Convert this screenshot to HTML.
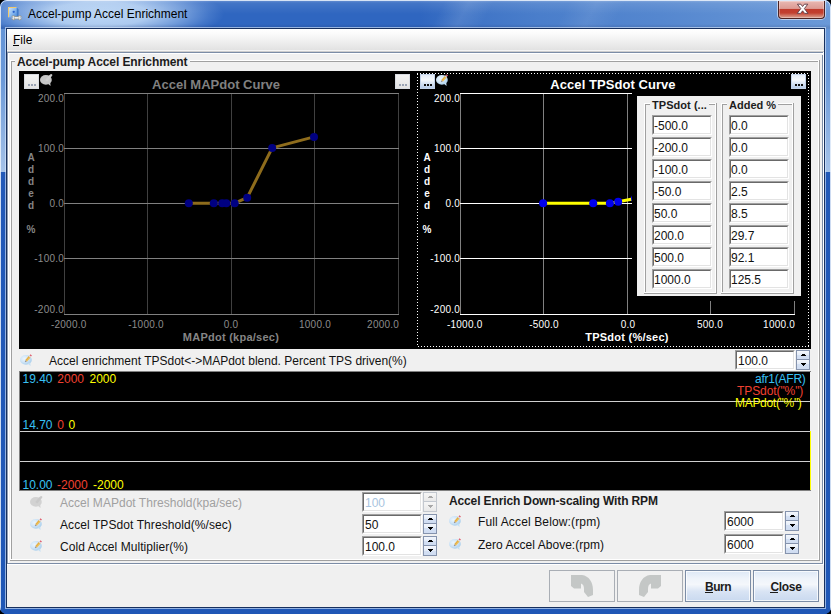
<!DOCTYPE html>
<html><head><meta charset="utf-8"><title>Accel-pump Accel Enrichment</title>
<style>
html,body{margin:0;padding:0;}
body{width:831px;height:614px;background:#000;overflow:hidden;position:relative;font-family:"Liberation Sans",sans-serif;}
.t{position:absolute;white-space:pre;font-family:"Liberation Sans",sans-serif;}
.t.s10{letter-spacing:0.22px;}
.abs{position:absolute;}
.fld{position:absolute;background:#fff;box-sizing:border-box;border-top:1px solid #a0a0a0;border-left:1px solid #a0a0a0;border-right:1px solid #fff;border-bottom:1px solid #fff;}
.fld i{position:absolute;left:0;top:0;right:0;bottom:0;border-top:1px solid #696969;border-left:1px solid #696969;border-right:1px solid #e3e3e3;border-bottom:1px solid #e3e3e3;}
.grp{position:absolute;box-sizing:border-box;border:1px solid #fff;}
.grp:before{content:"";position:absolute;left:-2px;top:-2px;right:0;bottom:0;border:1px solid #a0a0a0;}
.sb{position:absolute;width:15px;height:15px;box-sizing:border-box;border:1px solid #d9dce2;background:linear-gradient(#f3f3f3,#ebebeb 55%,#e2e2e2);}
.sb.hot{border-color:#c3d3ea;background:linear-gradient(#e4ecf8 0%,#f6f9fd 38%,#dbe6f5 62%,#b6cbe9 100%);}
.sb.hot b{background:#111;}
.sb b{position:absolute;top:9px;width:2px;height:2px;background:#9aa3b4;}
.btn{position:absolute;box-sizing:border-box;height:32px;width:66px;border:1px solid #707070;border-radius:0px;}
.btn.en{background:linear-gradient(#dde8f6 0%,#eef3fa 25%,#f4f7fb 45%,#d9e4f4 68%,#c9d9ef 100%);border-color:#7c8da6;box-shadow:inset 0 0 0 1px rgba(255,255,255,.75);}
.btn.dis{background:#f1f1f1;border-color:#a9aeb5;}
.spin{position:absolute;width:14px;height:10px;box-sizing:border-box;border:1px solid #8593ad;background:linear-gradient(#f4f7fc,#e4ecf8 50%,#d4e0f3 50%,#cfdcf1);}
.spin.d{border-color:#c3c8cf;background:linear-gradient(#f6f6f6,#e9e9e9);}
</style></head><body>

<div class="abs" style="left:0;top:0;width:831px;height:614px;border-radius:7px 7px 7px 7px;overflow:hidden;background:#2259b8;">
<div class="abs" style="left:0;top:0;width:831px;height:29px;background:linear-gradient(90deg,#2f66c0 0px,#2f66c0 420px,#3f74c6 470px,#4a7ecb 540px,#5587cf 660px,#6a99d8 831px);"></div>
<div class="abs" style="left:400px;top:0;width:431px;height:29px;background:linear-gradient(118deg,rgba(255,255,255,0) 40px,rgba(255,255,255,.10) 62px,rgba(255,255,255,0) 84px,rgba(255,255,255,0) 150px,rgba(255,255,255,.08) 175px,rgba(255,255,255,0) 200px);"></div>
<div class="abs" style="left:-26px;top:-16px;width:250px;height:60px;background:radial-gradient(ellipse closest-side at center,rgba(196,221,248,.95) 0%,rgba(190,216,246,.88) 40%,rgba(168,200,240,.55) 68%,rgba(150,186,236,.2) 88%,rgba(150,186,236,0) 100%);"></div>
<div class="abs" style="left:0;top:0;width:831px;height:29px;background:linear-gradient(180deg,rgba(255,255,255,.30) 0px,rgba(255,255,255,.10) 3px,rgba(255,255,255,0) 14px,rgba(0,0,40,0) 24px,rgba(0,0,40,.10) 27px);"></div>
<div class="abs" style="left:0;top:29px;width:7px;height:585px;background:linear-gradient(180deg,#6494d6 0px,#6b99d8 50px,#a5c2e8 143px,#2259b8 143px,#1f57b6 585px);"></div>
<div class="abs" style="left:824px;top:29px;width:7px;height:585px;background:linear-gradient(180deg,#6494d6 0px,#6b99d8 50px,#a5c2e8 143px,#2259b8 143px,#1f57b6 585px);"></div>
<div class="abs" style="left:0;top:607px;width:831px;height:7px;background:#1f57b6;"></div>
<div class="abs" style="left:0;top:0;width:829px;height:620px;border:1px solid rgba(235,242,252,.85);border-radius:7px 7px 0 0;"></div>
<div class="abs" style="left:5px;top:27px;width:819px;height:580px;border:1px solid rgba(225,238,255,.6);"></div>
<div class="abs" style="left:6px;top:28px;width:817px;height:578px;border:1px solid #17305e;"></div>
</div>
<svg class="abs" style="left:7px;top:6px" width="18" height="18" viewBox="0 0 18 18">
<defs><linearGradient id="docg" x1="0" y1="0" x2="1" y2="1"><stop offset="0" stop-color="#d6e8fb"/><stop offset=".5" stop-color="#8fbdf0"/><stop offset="1" stop-color="#4a8cdc"/></linearGradient></defs>
<path d="M9.5 1.6 L11.6 3.2 L11.6 11.6 L9.5 11.2Z" fill="#3f7bcc"/>
<rect x="1.2" y="1.2" width="8.4" height="10.2" fill="url(#docg)"/>
<path d="M1.5 11.2 L1.5 1.5 L9.4 1.5" fill="none" stroke="#f2c96a" stroke-width="1"/>
<circle cx="6.7" cy="5.8" r="1.15" fill="#2a62cc"/>
<g stroke="#8e8e82" stroke-width=".7" fill="#e6e6e2"><circle cx="6.6" cy="11.8" r="2.1"/><circle cx="12.6" cy="11.8" r="2.1"/><rect x="7.6" y="10.8" width="4" height="2"/></g>
<rect x="7.4" y="11.15" width="4.4" height="1.3" fill="#f4f4f2"/>
<rect x="4.2" y="11.2" width="1.8" height="1.2" fill="#7fa9e2"/><rect x="13.2" y="11.2" width="1.8" height="1.2" fill="#8fb2e4"/>
</svg>
<div class="t" style="left:28px;top:8px;font-size:12px;line-height:12px;font-weight:normal;color:#000;">Accel-pump Accel Enrichment</div>
<div class="abs" style="left:777px;top:0px;width:49px;height:20px;box-sizing:border-box;border:1px solid rgba(255,255,255,.55);border-top:none;border-radius:0 0 5px 5px;"></div>
<div class="abs" style="left:778px;top:1px;width:47px;height:18px;box-sizing:border-box;border:1px solid #4d2323;border-top:none;border-radius:0 0 4px 4px;background:linear-gradient(#e9b8b2 0%,#dc9b94 44%,#c03a2c 47%,#c23f2f 70%,#cf7766 86%,#dba090 100%);box-shadow:inset 0 0 0 1px rgba(255,255,255,.30);"></div>
<svg class="abs" style="left:795px;top:3px" width="16" height="12" viewBox="0 0 16 12"><path d="M2.4 1.2 L5.8 1.2 L7.6 3.5 L9.4 1.2 L12.8 1.2 L9.4 5.6 L13 10.4 L9.6 10.4 L7.6 7.8 L5.6 10.4 L2.2 10.4 L5.8 5.6 Z" fill="#fff" stroke="#5b3a44" stroke-width=".9" stroke-linejoin="round"/></svg>
<div style="position:absolute;left:7px;top:29px;width:817px;height:578px;background:#f0f0f0;"></div>
<div style="position:absolute;left:7px;top:29px;width:817px;height:22px;background:linear-gradient(#ffffff 0%,#fbfbfb 20%,#f3f3f3 45%,#e9e9e9 75%,#e2e2e2 95%,#f4f4f4 96%,#f4f4f4 100%);"></div>
<div style="position:absolute;left:7px;top:51px;width:817px;height:1px;background:#cdcdcd;"></div>
<div style="position:absolute;left:7px;top:52px;width:816px;height:1px;background:#7b8ca6;"></div>
<div style="position:absolute;left:8px;top:53px;width:815px;height:1px;background:#fff;"></div>
<div style="position:absolute;left:7px;top:52px;width:1px;height:512px;background:#8e9bb0;"></div>
<div style="position:absolute;left:8px;top:53px;width:1px;height:510px;background:#fff;"></div>
<div style="position:absolute;left:822px;top:55px;width:1px;height:509px;background:#7b8ca6;"></div>
<div style="position:absolute;left:823px;top:52px;width:1px;height:513px;background:#fff;"></div>
<div style="position:absolute;left:7px;top:563px;width:816px;height:1px;background:#7b8ca6;"></div>
<div style="position:absolute;left:7px;top:564px;width:817px;height:1px;background:#fff;"></div>
<div class="t" style="left:13px;top:34px;font-size:12px;line-height:12px;font-weight:normal;color:#000;">File</div>
<div style="position:absolute;left:13px;top:45px;width:6px;height:1px;background:#000;"></div>
<div class="abs" style="left:10px;top:60px;width:809px;height:500px;box-sizing:border-box;border:1px solid #ffffff;"></div>
<div style="position:absolute;left:11px;top:61px;width:1px;height:498px;background:#a0a0a0;"></div>
<div style="position:absolute;left:11px;top:61px;width:807px;height:1px;background:#a0a0a0;"></div>
<div style="position:absolute;left:10px;top:560px;width:810px;height:1px;background:#a0a0a0;"></div>
<div style="position:absolute;left:819px;top:60px;width:1px;height:501px;background:#a0a0a0;"></div>
<div style="position:absolute;left:15px;top:56px;width:175px;height:12px;background:#f0f0f0;"></div>
<div class="t" style="left:17px;top:56px;font-size:12px;line-height:12px;font-weight:bold;color:#1c1c1c;letter-spacing:-0.09px;">Accel-pump Accel Enrichment</div>
<div style="position:absolute;left:19px;top:71px;width:792px;height:278px;background:#000;"></div>
<svg class="abs" style="left:0;top:0" width="831" height="614" viewBox="0 0 831 614" shape-rendering="crispEdges"><rect x="64" y="93" width="1" height="222" fill="#404040"/><rect x="147" y="93" width="1" height="222" fill="#404040"/><rect x="231" y="93" width="1" height="222" fill="#404040"/><rect x="314" y="93" width="1" height="222" fill="#404040"/><rect x="398" y="93" width="1" height="222" fill="#404040"/><rect x="64" y="93" width="335" height="1" fill="#808080"/><rect x="64" y="148" width="335" height="1" fill="#808080"/><rect x="64" y="203" width="335" height="1" fill="#808080"/><rect x="64" y="258" width="335" height="1" fill="#808080"/><rect x="64" y="314" width="335" height="1" fill="#808080"/><rect x="460" y="93" width="1" height="222" fill="#808080"/><rect x="543" y="93" width="1" height="222" fill="#808080"/><rect x="627" y="93" width="1" height="222" fill="#808080"/><rect x="710" y="93" width="1" height="222" fill="#808080"/><rect x="794" y="93" width="1" height="222" fill="#808080"/><rect x="460" y="93" width="335" height="1" fill="#ffffff"/><rect x="460" y="148" width="335" height="1" fill="#ffffff"/><rect x="460" y="203" width="335" height="1" fill="#ffffff"/><rect x="460" y="258" width="335" height="1" fill="#ffffff"/><rect x="460" y="314" width="335" height="1" fill="#ffffff"/></svg>
<svg class="abs" style="left:0;top:0" width="831" height="614" viewBox="0 0 831 614"><polyline fill="none" stroke="#8e6c1c" stroke-width="3" stroke-linejoin="round" points="188.8,203.2 213.8,203.2 222.2,203.2 226.3,203.2 234.7,203.2 247.2,197.7 272.2,147.9 314.0,136.9"/><circle cx="188.8" cy="203.2" r="4" fill="#000082"/><circle cx="213.8" cy="203.2" r="4" fill="#000082"/><circle cx="222.2" cy="203.2" r="4" fill="#000082"/><circle cx="226.3" cy="203.2" r="4" fill="#000082"/><circle cx="234.7" cy="203.2" r="4" fill="#000082"/><circle cx="247.2" cy="197.7" r="4" fill="#000082"/><circle cx="272.2" cy="147.9" r="4" fill="#000082"/><circle cx="314.0" cy="136.9" r="4" fill="#000082"/><polyline fill="none" stroke="#ffff00" stroke-width="3" stroke-linejoin="round" points="543.1,203.2 593.2,203.2 609.9,203.2 618.2,201.8 635.0,198.5 660.0,186.8 710.1,152.3 793.6,133.9"/><circle cx="543.1" cy="203.2" r="4" fill="#0000ee"/><circle cx="593.2" cy="203.2" r="4" fill="#0000ee"/><circle cx="609.9" cy="203.2" r="4" fill="#0000ee"/><circle cx="618.2" cy="201.8" r="4" fill="#0000ee"/><circle cx="635.0" cy="198.5" r="4" fill="#0000ee"/><circle cx="660.0" cy="186.8" r="4" fill="#0000ee"/><circle cx="710.1" cy="152.3" r="4" fill="#0000ee"/><circle cx="793.6" cy="133.9" r="4" fill="#0000ee"/></svg>
<div class="t" style="left:66px;width:300px;text-align:center;top:78px;font-size:13px;line-height:13px;font-weight:bold;color:#808080;">Accel MAPdot Curve</div>
<div class="t" style="left:463px;width:300px;text-align:center;top:78px;font-size:13px;line-height:13px;font-weight:bold;color:#ffffff;letter-spacing:0.06px;">Accel TPSdot Curve</div>
<div class="t s10" style="right:767px;top:94px;font-size:10px;line-height:10px;font-weight:normal;color:#8c8c8c;">200.0</div>
<div class="t s10" style="right:767px;top:144px;font-size:10px;line-height:10px;font-weight:normal;color:#8c8c8c;">100.0</div>
<div class="t s10" style="right:767px;top:199px;font-size:10px;line-height:10px;font-weight:normal;color:#8c8c8c;">0.0</div>
<div class="t s10" style="right:767px;top:254px;font-size:10px;line-height:10px;font-weight:normal;color:#8c8c8c;">-100.0</div>
<div class="t s10" style="right:767px;top:305px;font-size:10px;line-height:10px;font-weight:normal;color:#8c8c8c;">-200.0</div>
<div class="t s10" style="right:371px;top:94px;font-size:10px;line-height:10px;font-weight:normal;color:#ffffff;">200.0</div>
<div class="t s10" style="right:371px;top:144px;font-size:10px;line-height:10px;font-weight:normal;color:#ffffff;">100.0</div>
<div class="t s10" style="right:371px;top:199px;font-size:10px;line-height:10px;font-weight:normal;color:#ffffff;">0.0</div>
<div class="t s10" style="right:371px;top:254px;font-size:10px;line-height:10px;font-weight:normal;color:#ffffff;">-100.0</div>
<div class="t s10" style="right:371px;top:305px;font-size:10px;line-height:10px;font-weight:normal;color:#ffffff;">-200.0</div>
<div class="t s10" style="left:51px;top:320px;font-size:10px;line-height:10px;font-weight:normal;color:#8c8c8c;">-2000.0</div>
<div class="t s10" style="left:-4px;width:300px;text-align:center;top:320px;font-size:10px;line-height:10px;font-weight:normal;color:#8c8c8c;">-1000.0</div>
<div class="t s10" style="left:81px;width:300px;text-align:center;top:320px;font-size:10px;line-height:10px;font-weight:normal;color:#8c8c8c;">0.0</div>
<div class="t s10" style="left:165px;width:300px;text-align:center;top:320px;font-size:10px;line-height:10px;font-weight:normal;color:#8c8c8c;">1000.0</div>
<div class="t s10" style="right:432px;top:320px;font-size:10px;line-height:10px;font-weight:normal;color:#8c8c8c;">2000.0</div>
<div class="t" style="left:81px;width:300px;text-align:center;top:332px;font-size:11px;line-height:11px;font-weight:bold;color:#858585;letter-spacing:0.25px;">MAPdot (kpa/sec)</div>
<div class="t s10" style="left:447px;top:320px;font-size:10px;line-height:10px;font-weight:normal;color:#fff;">-1000.0</div>
<div class="t s10" style="left:394px;width:300px;text-align:center;top:320px;font-size:10px;line-height:10px;font-weight:normal;color:#fff;">-500.0</div>
<div class="t s10" style="left:478px;width:300px;text-align:center;top:320px;font-size:10px;line-height:10px;font-weight:normal;color:#fff;">0.0</div>
<div class="t s10" style="left:560px;width:300px;text-align:center;top:320px;font-size:10px;line-height:10px;font-weight:normal;color:#fff;">500.0</div>
<div class="t s10" style="right:36px;top:320px;font-size:10px;line-height:10px;font-weight:normal;color:#fff;">1000.0</div>
<div class="t" style="left:477px;width:300px;text-align:center;top:332px;font-size:11px;line-height:11px;font-weight:bold;color:#fff;letter-spacing:0.25px;">TPSdot (%/sec)</div>
<div class="t" style="left:-119px;width:300px;text-align:center;top:153px;font-size:10px;line-height:10px;font-weight:bold;color:#858585;">A</div>
<div class="t" style="left:-119px;width:300px;text-align:center;top:165px;font-size:10px;line-height:10px;font-weight:bold;color:#858585;">d</div>
<div class="t" style="left:-119px;width:300px;text-align:center;top:177px;font-size:10px;line-height:10px;font-weight:bold;color:#858585;">d</div>
<div class="t" style="left:-119px;width:300px;text-align:center;top:189px;font-size:10px;line-height:10px;font-weight:bold;color:#858585;">e</div>
<div class="t" style="left:-119px;width:300px;text-align:center;top:201px;font-size:10px;line-height:10px;font-weight:bold;color:#858585;">d</div>
<div class="t" style="left:-119px;width:300px;text-align:center;top:225px;font-size:10px;line-height:10px;font-weight:bold;color:#858585;">%</div>
<div class="t" style="left:277px;width:300px;text-align:center;top:153px;font-size:10px;line-height:10px;font-weight:bold;color:#ffffff;">A</div>
<div class="t" style="left:277px;width:300px;text-align:center;top:165px;font-size:10px;line-height:10px;font-weight:bold;color:#ffffff;">d</div>
<div class="t" style="left:277px;width:300px;text-align:center;top:177px;font-size:10px;line-height:10px;font-weight:bold;color:#ffffff;">d</div>
<div class="t" style="left:277px;width:300px;text-align:center;top:189px;font-size:10px;line-height:10px;font-weight:bold;color:#ffffff;">e</div>
<div class="t" style="left:277px;width:300px;text-align:center;top:201px;font-size:10px;line-height:10px;font-weight:bold;color:#ffffff;">d</div>
<div class="t" style="left:277px;width:300px;text-align:center;top:225px;font-size:10px;line-height:10px;font-weight:bold;color:#ffffff;">%</div>
<div class="abs" style="left:417px;top:73px;width:392px;height:1px;background:repeating-linear-gradient(90deg,#fff 0,#fff 1px,transparent 1px,transparent 3px);"></div>
<div class="abs" style="left:418px;top:346px;width:391px;height:1px;background:repeating-linear-gradient(90deg,#fff 0,#fff 1px,transparent 1px,transparent 3px);"></div>
<div class="abs" style="left:417px;top:74px;width:1px;height:273px;background:repeating-linear-gradient(180deg,#fff 0,#fff 1px,transparent 1px,transparent 3px);"></div>
<div class="abs" style="left:808px;top:75px;width:1px;height:272px;background:repeating-linear-gradient(180deg,#fff 0,#fff 1px,transparent 1px,transparent 3px);"></div>
<div style="position:absolute;left:417px;top:73px;width:1px;height:1px;background:#fff;"></div>
<div class="sb" style="left:24px;top:74px"><b style="left:3px"></b><b style="left:6px"></b><b style="left:9px"></b></div>
<div class="sb" style="left:395px;top:74px"><b style="left:3px"></b><b style="left:6px"></b><b style="left:9px"></b></div>
<div class="sb hot" style="left:420px;top:74px"><b style="left:3px"></b><b style="left:6px"></b><b style="left:9px"></b></div>
<div class="sb hot" style="left:791px;top:74px"><b style="left:3px"></b><b style="left:6px"></b><b style="left:9px"></b></div>
<svg class="abs" style="left:40px;top:74px" width="14" height="13" viewBox="0 0 14 13"><ellipse cx="5.9" cy="5.9" rx="5.9" ry="4.8" fill="#c6c6c6"/><path d="M7.6 9.6 L10.6 12 L10.2 8.4Z" fill="#c6c6c6"/><path d="M6.2 6.8 L10.6 1.6" stroke="#d0d0d0" stroke-width="2.4"/><path d="M10.4 2 L11.8 0.4" stroke="#d0d0d0" stroke-width="2"/></svg>
<svg class="abs" style="left:436px;top:74px" width="14" height="13" viewBox="0 0 14 13"><defs><radialGradient id="g436_74" cx=".38" cy=".38" r=".68"><stop offset="0" stop-color="#edf6fd"/><stop offset=".5" stop-color="#d2e6f7"/><stop offset="1" stop-color="#a6cdec"/></radialGradient></defs><ellipse cx="5.9" cy="5.9" rx="5.9" ry="4.8" fill="url(#g436_74)"/><path d="M7.6 9.6 L10.6 12 L10.2 8.4Z" fill="#c3dff3"/><path d="M5.3 7.9 L6.3 6.7" stroke="#8c8c98" stroke-width="1.4"/><path d="M6.2 6.8 L9.6 2.8" stroke="#e6ae42" stroke-width="2.3"/><path d="M6.7 7.2 L10.0 3.2" stroke="#f3d27a" stroke-width=".8"/><path d="M9.6 2.8 L10.3 2.0" stroke="#dfe3ea" stroke-width="2.1"/><path d="M10.3 2.0 L11.2 0.9" stroke="#e06070" stroke-width="1.9"/></svg>
<div style="position:absolute;left:632px;top:91px;width:174px;height:210px;background:#000;"></div>
<div style="position:absolute;left:637px;top:96px;width:164px;height:200px;background:#f0f0f0;"></div>
<div class="abs" style="left:644px;top:103px;width:72px;height:190px;box-sizing:border-box;border:1px solid #ffffff;"></div>
<div style="position:absolute;left:645px;top:104px;width:1px;height:188px;background:#a0a0a0;"></div>
<div style="position:absolute;left:645px;top:104px;width:70px;height:1px;background:#a0a0a0;"></div>
<div style="position:absolute;left:644px;top:293px;width:73px;height:1px;background:#a0a0a0;"></div>
<div style="position:absolute;left:716px;top:103px;width:1px;height:191px;background:#a0a0a0;"></div>
<div class="abs" style="left:721px;top:103px;width:72px;height:190px;box-sizing:border-box;border:1px solid #ffffff;"></div>
<div style="position:absolute;left:722px;top:104px;width:1px;height:188px;background:#a0a0a0;"></div>
<div style="position:absolute;left:722px;top:104px;width:70px;height:1px;background:#a0a0a0;"></div>
<div style="position:absolute;left:721px;top:293px;width:73px;height:1px;background:#a0a0a0;"></div>
<div style="position:absolute;left:793px;top:103px;width:1px;height:191px;background:#a0a0a0;"></div>
<div style="position:absolute;left:650px;top:99px;width:59px;height:12px;background:#f0f0f0;"></div>
<div style="position:absolute;left:727px;top:99px;width:51px;height:12px;background:#f0f0f0;"></div>
<div class="t" style="left:652px;top:100px;font-size:11px;line-height:11px;font-weight:bold;color:#1c1c1c;letter-spacing:0.05px;">TPSdot (...</div>
<div class="t" style="left:729px;top:100px;font-size:11px;line-height:11px;font-weight:bold;color:#1c1c1c;">Added %</div>
<div class="fld" style="left:652px;top:115px;width:60px;height:20px"><i></i></div>
<div class="fld" style="left:729px;top:115px;width:60px;height:20px"><i></i></div>
<div class="t" style="left:654px;top:120px;font-size:12px;line-height:12px;font-weight:normal;color:#111;">-500.0</div>
<div class="t" style="left:731px;top:120px;font-size:12px;line-height:12px;font-weight:normal;color:#111;">0.0</div>
<div class="fld" style="left:652px;top:137px;width:60px;height:20px"><i></i></div>
<div class="fld" style="left:729px;top:137px;width:60px;height:20px"><i></i></div>
<div class="t" style="left:654px;top:142px;font-size:12px;line-height:12px;font-weight:normal;color:#111;">-200.0</div>
<div class="t" style="left:731px;top:142px;font-size:12px;line-height:12px;font-weight:normal;color:#111;">0.0</div>
<div class="fld" style="left:652px;top:159px;width:60px;height:20px"><i></i></div>
<div class="fld" style="left:729px;top:159px;width:60px;height:20px"><i></i></div>
<div class="t" style="left:654px;top:164px;font-size:12px;line-height:12px;font-weight:normal;color:#111;">-100.0</div>
<div class="t" style="left:731px;top:164px;font-size:12px;line-height:12px;font-weight:normal;color:#111;">0.0</div>
<div class="fld" style="left:652px;top:181px;width:60px;height:20px"><i></i></div>
<div class="fld" style="left:729px;top:181px;width:60px;height:20px"><i></i></div>
<div class="t" style="left:654px;top:186px;font-size:12px;line-height:12px;font-weight:normal;color:#111;">-50.0</div>
<div class="t" style="left:731px;top:186px;font-size:12px;line-height:12px;font-weight:normal;color:#111;">2.5</div>
<div class="fld" style="left:652px;top:203px;width:60px;height:20px"><i></i></div>
<div class="fld" style="left:729px;top:203px;width:60px;height:20px"><i></i></div>
<div class="t" style="left:654px;top:208px;font-size:12px;line-height:12px;font-weight:normal;color:#111;">50.0</div>
<div class="t" style="left:731px;top:208px;font-size:12px;line-height:12px;font-weight:normal;color:#111;">8.5</div>
<div class="fld" style="left:652px;top:225px;width:60px;height:20px"><i></i></div>
<div class="fld" style="left:729px;top:225px;width:60px;height:20px"><i></i></div>
<div class="t" style="left:654px;top:230px;font-size:12px;line-height:12px;font-weight:normal;color:#111;">200.0</div>
<div class="t" style="left:731px;top:230px;font-size:12px;line-height:12px;font-weight:normal;color:#111;">29.7</div>
<div class="fld" style="left:652px;top:247px;width:60px;height:20px"><i></i></div>
<div class="fld" style="left:729px;top:247px;width:60px;height:20px"><i></i></div>
<div class="t" style="left:654px;top:252px;font-size:12px;line-height:12px;font-weight:normal;color:#111;">500.0</div>
<div class="t" style="left:731px;top:252px;font-size:12px;line-height:12px;font-weight:normal;color:#111;">92.1</div>
<div class="fld" style="left:652px;top:269px;width:60px;height:20px"><i></i></div>
<div class="fld" style="left:729px;top:269px;width:60px;height:20px"><i></i></div>
<div class="t" style="left:654px;top:274px;font-size:12px;line-height:12px;font-weight:normal;color:#111;">1000.0</div>
<div class="t" style="left:731px;top:274px;font-size:12px;line-height:12px;font-weight:normal;color:#111;">125.5</div>
<svg class="abs" style="left:20px;top:354px" width="14" height="13" viewBox="0 0 14 13"><defs><radialGradient id="g20_354" cx=".38" cy=".38" r=".68"><stop offset="0" stop-color="#edf6fd"/><stop offset=".5" stop-color="#d2e6f7"/><stop offset="1" stop-color="#a6cdec"/></radialGradient></defs><ellipse cx="5.9" cy="5.9" rx="5.9" ry="4.8" fill="url(#g20_354)"/><path d="M7.6 9.6 L10.6 12 L10.2 8.4Z" fill="#c3dff3"/><path d="M5.3 7.9 L6.3 6.7" stroke="#8c8c98" stroke-width="1.4"/><path d="M6.2 6.8 L9.6 2.8" stroke="#e6ae42" stroke-width="2.3"/><path d="M6.7 7.2 L10.0 3.2" stroke="#f3d27a" stroke-width=".8"/><path d="M9.6 2.8 L10.3 2.0" stroke="#dfe3ea" stroke-width="2.1"/><path d="M10.3 2.0 L11.2 0.9" stroke="#e06070" stroke-width="1.9"/></svg>
<div class="t" style="left:49px;top:355px;font-size:12px;line-height:12px;font-weight:normal;color:#111;">Accel enrichment TPSdot&lt;-&gt;MAPdot blend. Percent TPS driven(%)</div>
<div class="fld" style="left:735px;top:350px;width:60px;height:20px"><i></i></div>
<div class="t" style="left:738px;top:355px;font-size:12px;line-height:12px;font-weight:normal;color:#111;">100.0</div>
<div class="spin" style="left:796px;top:350px"></div><div class="spin" style="left:796px;top:360px;border-top:none"></div>
<svg class="abs" style="left:796px;top:350px" width="14" height="20" viewBox="0 0 14 20" shape-rendering="crispEdges"><rect x="6" y="4" width="3" height="1" fill="#000"/><rect x="5" y="5" width="5" height="1" fill="#000"/><rect x="5" y="13" width="5" height="1" fill="#000"/><rect x="6" y="14" width="3" height="1" fill="#000"/><rect x="7" y="15" width="1" height="1" fill="#000"/></svg>
<div style="position:absolute;left:19px;top:371px;width:792px;height:120px;background:#808080;"></div>
<div style="position:absolute;left:20px;top:372px;width:790px;height:118px;background:#000;"></div>
<div style="position:absolute;left:810px;top:372px;width:1px;height:59px;background:#f0f0f0;"></div>
<div style="position:absolute;left:810px;top:431px;width:1px;height:59px;background:#ffff00;"></div>
<div style="position:absolute;left:20px;top:401px;width:790px;height:1px;background:#d0d0d0;"></div>
<div style="position:absolute;left:20px;top:431px;width:790px;height:1px;background:#d0d0d0;"></div>
<div style="position:absolute;left:20px;top:461px;width:790px;height:1px;background:#d0d0d0;"></div>
<div class="t" style="left:22.5px;top:373px;font-size:12px;line-height:12px;font-weight:normal;color:#38c0f4;">19.40</div>
<div class="t" style="left:57.3px;top:373px;font-size:12px;line-height:12px;font-weight:normal;color:#f04030;">2000</div>
<div class="t" style="left:89.5px;top:373px;font-size:12px;line-height:12px;font-weight:normal;color:#ffff00;">2000</div>
<div class="t" style="left:22.5px;top:419px;font-size:12px;line-height:12px;font-weight:normal;color:#38c0f4;">14.70</div>
<div class="t" style="left:57.3px;top:419px;font-size:12px;line-height:12px;font-weight:normal;color:#f04030;">0</div>
<div class="t" style="left:68.5px;top:419px;font-size:12px;line-height:12px;font-weight:normal;color:#ffff00;">0</div>
<div class="t" style="left:22.5px;top:479px;font-size:12px;line-height:12px;font-weight:normal;color:#38c0f4;">10.00</div>
<div class="t" style="left:57px;top:479px;font-size:12px;line-height:12px;font-weight:normal;color:#f04030;">-2000</div>
<div class="t" style="left:93px;top:479px;font-size:12px;line-height:12px;font-weight:normal;color:#ffff00;">-2000</div>
<div class="t" style="left:755px;top:373px;font-size:12px;line-height:12px;font-weight:normal;color:#38c0f4;letter-spacing:-0.23px;">afr1(AFR)</div>
<div class="t" style="left:737px;top:385px;font-size:12px;line-height:12px;font-weight:normal;color:#f04030;letter-spacing:-0.09px;">TPSdot("%")</div>
<div class="t" style="left:735px;top:397px;font-size:12px;line-height:12px;font-weight:normal;color:#ffff00;letter-spacing:-0.3px;">MAPdot("%")</div>
<svg class="abs" style="left:30px;top:496px" width="14" height="13" viewBox="0 0 14 13"><ellipse cx="5.9" cy="5.9" rx="5.9" ry="4.8" fill="#d2d2d2"/><path d="M7.6 9.6 L10.6 12 L10.2 8.4Z" fill="#d2d2d2"/><path d="M6.2 6.8 L10.6 1.6" stroke="#c9c9c9" stroke-width="2.4"/><path d="M10.4 2 L11.8 0.4" stroke="#c9c9c9" stroke-width="2"/></svg>
<div class="t" style="left:60px;top:497px;font-size:12px;line-height:12px;font-weight:normal;color:#a0a0a0;letter-spacing:0.03px;">Accel MAPdot Threshold(kpa/sec)</div>
<svg class="abs" style="left:30px;top:518px" width="14" height="13" viewBox="0 0 14 13"><defs><radialGradient id="g30_518" cx=".38" cy=".38" r=".68"><stop offset="0" stop-color="#edf6fd"/><stop offset=".5" stop-color="#d2e6f7"/><stop offset="1" stop-color="#a6cdec"/></radialGradient></defs><ellipse cx="5.9" cy="5.9" rx="5.9" ry="4.8" fill="url(#g30_518)"/><path d="M7.6 9.6 L10.6 12 L10.2 8.4Z" fill="#c3dff3"/><path d="M5.3 7.9 L6.3 6.7" stroke="#8c8c98" stroke-width="1.4"/><path d="M6.2 6.8 L9.6 2.8" stroke="#e6ae42" stroke-width="2.3"/><path d="M6.7 7.2 L10.0 3.2" stroke="#f3d27a" stroke-width=".8"/><path d="M9.6 2.8 L10.3 2.0" stroke="#dfe3ea" stroke-width="2.1"/><path d="M10.3 2.0 L11.2 0.9" stroke="#e06070" stroke-width="1.9"/></svg>
<div class="t" style="left:60px;top:519px;font-size:12px;line-height:12px;font-weight:normal;color:#111;letter-spacing:0.08px;">Accel TPSdot Threshold(%/sec)</div>
<svg class="abs" style="left:30px;top:540px" width="14" height="13" viewBox="0 0 14 13"><defs><radialGradient id="g30_540" cx=".38" cy=".38" r=".68"><stop offset="0" stop-color="#edf6fd"/><stop offset=".5" stop-color="#d2e6f7"/><stop offset="1" stop-color="#a6cdec"/></radialGradient></defs><ellipse cx="5.9" cy="5.9" rx="5.9" ry="4.8" fill="url(#g30_540)"/><path d="M7.6 9.6 L10.6 12 L10.2 8.4Z" fill="#c3dff3"/><path d="M5.3 7.9 L6.3 6.7" stroke="#8c8c98" stroke-width="1.4"/><path d="M6.2 6.8 L9.6 2.8" stroke="#e6ae42" stroke-width="2.3"/><path d="M6.7 7.2 L10.0 3.2" stroke="#f3d27a" stroke-width=".8"/><path d="M9.6 2.8 L10.3 2.0" stroke="#dfe3ea" stroke-width="2.1"/><path d="M10.3 2.0 L11.2 0.9" stroke="#e06070" stroke-width="1.9"/></svg>
<div class="t" style="left:60px;top:541px;font-size:12px;line-height:12px;font-weight:normal;color:#111;letter-spacing:0.06px;">Cold Accel Multiplier(%)</div>
<div class="fld" style="left:362px;top:492px;width:60px;height:20px"><i></i></div>
<div class="t" style="left:365px;top:497px;font-size:12px;line-height:12px;font-weight:normal;color:#a8c4e0;">100</div>
<div class="spin d" style="left:423px;top:492px"></div><div class="spin d" style="left:423px;top:502px;border-top:none"></div>
<svg class="abs" style="left:423px;top:492px" width="14" height="20" viewBox="0 0 14 20" shape-rendering="crispEdges"><rect x="6" y="4" width="3" height="1" fill="#a8a8a8"/><rect x="5" y="5" width="5" height="1" fill="#a8a8a8"/><rect x="5" y="13" width="5" height="1" fill="#a8a8a8"/><rect x="6" y="14" width="3" height="1" fill="#a8a8a8"/><rect x="7" y="15" width="1" height="1" fill="#a8a8a8"/></svg>
<div class="fld" style="left:362px;top:514px;width:60px;height:20px"><i></i></div>
<div class="t" style="left:365px;top:519px;font-size:12px;line-height:12px;font-weight:normal;color:#111;">50</div>
<div class="spin" style="left:423px;top:514px"></div><div class="spin" style="left:423px;top:524px;border-top:none"></div>
<svg class="abs" style="left:423px;top:514px" width="14" height="20" viewBox="0 0 14 20" shape-rendering="crispEdges"><rect x="6" y="4" width="3" height="1" fill="#000"/><rect x="5" y="5" width="5" height="1" fill="#000"/><rect x="5" y="13" width="5" height="1" fill="#000"/><rect x="6" y="14" width="3" height="1" fill="#000"/><rect x="7" y="15" width="1" height="1" fill="#000"/></svg>
<div class="fld" style="left:362px;top:536px;width:60px;height:20px"><i></i></div>
<div class="t" style="left:365px;top:541px;font-size:12px;line-height:12px;font-weight:normal;color:#111;">100.0</div>
<div class="spin" style="left:423px;top:536px"></div><div class="spin" style="left:423px;top:546px;border-top:none"></div>
<svg class="abs" style="left:423px;top:536px" width="14" height="20" viewBox="0 0 14 20" shape-rendering="crispEdges"><rect x="6" y="4" width="3" height="1" fill="#000"/><rect x="5" y="5" width="5" height="1" fill="#000"/><rect x="5" y="13" width="5" height="1" fill="#000"/><rect x="6" y="14" width="3" height="1" fill="#000"/><rect x="7" y="15" width="1" height="1" fill="#000"/></svg>
<div class="t" style="left:449px;top:495px;font-size:12px;line-height:12px;font-weight:bold;color:#1c1c1c;letter-spacing:-0.13px;">Accel Enrich Down-scaling With RPM</div>
<svg class="abs" style="left:449px;top:515px" width="14" height="13" viewBox="0 0 14 13"><defs><radialGradient id="g449_515" cx=".38" cy=".38" r=".68"><stop offset="0" stop-color="#edf6fd"/><stop offset=".5" stop-color="#d2e6f7"/><stop offset="1" stop-color="#a6cdec"/></radialGradient></defs><ellipse cx="5.9" cy="5.9" rx="5.9" ry="4.8" fill="url(#g449_515)"/><path d="M7.6 9.6 L10.6 12 L10.2 8.4Z" fill="#c3dff3"/><path d="M5.3 7.9 L6.3 6.7" stroke="#8c8c98" stroke-width="1.4"/><path d="M6.2 6.8 L9.6 2.8" stroke="#e6ae42" stroke-width="2.3"/><path d="M6.7 7.2 L10.0 3.2" stroke="#f3d27a" stroke-width=".8"/><path d="M9.6 2.8 L10.3 2.0" stroke="#dfe3ea" stroke-width="2.1"/><path d="M10.3 2.0 L11.2 0.9" stroke="#e06070" stroke-width="1.9"/></svg>
<div class="t" style="left:478px;top:516px;font-size:12px;line-height:12px;font-weight:normal;color:#111;letter-spacing:0.14px;">Full Accel Below:(rpm)</div>
<svg class="abs" style="left:449px;top:538px" width="14" height="13" viewBox="0 0 14 13"><defs><radialGradient id="g449_538" cx=".38" cy=".38" r=".68"><stop offset="0" stop-color="#edf6fd"/><stop offset=".5" stop-color="#d2e6f7"/><stop offset="1" stop-color="#a6cdec"/></radialGradient></defs><ellipse cx="5.9" cy="5.9" rx="5.9" ry="4.8" fill="url(#g449_538)"/><path d="M7.6 9.6 L10.6 12 L10.2 8.4Z" fill="#c3dff3"/><path d="M5.3 7.9 L6.3 6.7" stroke="#8c8c98" stroke-width="1.4"/><path d="M6.2 6.8 L9.6 2.8" stroke="#e6ae42" stroke-width="2.3"/><path d="M6.7 7.2 L10.0 3.2" stroke="#f3d27a" stroke-width=".8"/><path d="M9.6 2.8 L10.3 2.0" stroke="#dfe3ea" stroke-width="2.1"/><path d="M10.3 2.0 L11.2 0.9" stroke="#e06070" stroke-width="1.9"/></svg>
<div class="t" style="left:478px;top:539px;font-size:12px;line-height:12px;font-weight:normal;color:#111;letter-spacing:0.03px;">Zero Accel Above:(rpm)</div>
<div class="fld" style="left:724px;top:511px;width:60px;height:20px"><i></i></div>
<div class="t" style="left:727px;top:516px;font-size:12px;line-height:12px;font-weight:normal;color:#111;">6000</div>
<div class="spin" style="left:785px;top:511px"></div><div class="spin" style="left:785px;top:521px;border-top:none"></div>
<svg class="abs" style="left:785px;top:511px" width="14" height="20" viewBox="0 0 14 20" shape-rendering="crispEdges"><rect x="6" y="4" width="3" height="1" fill="#000"/><rect x="5" y="5" width="5" height="1" fill="#000"/><rect x="5" y="13" width="5" height="1" fill="#000"/><rect x="6" y="14" width="3" height="1" fill="#000"/><rect x="7" y="15" width="1" height="1" fill="#000"/></svg>
<div class="fld" style="left:724px;top:534px;width:60px;height:20px"><i></i></div>
<div class="t" style="left:727px;top:539px;font-size:12px;line-height:12px;font-weight:normal;color:#111;">6000</div>
<div class="spin" style="left:785px;top:534px"></div><div class="spin" style="left:785px;top:544px;border-top:none"></div>
<svg class="abs" style="left:785px;top:534px" width="14" height="20" viewBox="0 0 14 20" shape-rendering="crispEdges"><rect x="6" y="4" width="3" height="1" fill="#000"/><rect x="5" y="5" width="5" height="1" fill="#000"/><rect x="5" y="13" width="5" height="1" fill="#000"/><rect x="6" y="14" width="3" height="1" fill="#000"/><rect x="7" y="15" width="1" height="1" fill="#000"/></svg>
<div class="btn dis" style="left:549px;top:570px"></div>
<div class="btn dis" style="left:617px;top:570px"></div>
<div class="btn en" style="left:685px;top:570px"></div>
<div class="btn en" style="left:753px;top:570px"></div>
<div class="t" style="left:568px;width:300px;text-align:center;top:581px;font-size:12px;line-height:12px;font-weight:bold;color:#1c1c1c;letter-spacing:-0.5px;">Burn</div>
<div class="t" style="left:636px;width:300px;text-align:center;top:581px;font-size:12px;line-height:12px;font-weight:bold;color:#1c1c1c;letter-spacing:-0.33px;">Close</div>
<div style="position:absolute;left:705px;top:592px;width:8px;height:1px;background:#1c1c1c;"></div>
<div style="position:absolute;left:770px;top:592px;width:8px;height:1px;background:#1c1c1c;"></div>
<svg class="abs" style="left:549px;top:570px" width="66" height="32" viewBox="0 0 66 32"><path d="M22 5 L33 5 C40 6 44 12 44 20 L44 25 L39 27 L35 22 L35 19 C35 16 34 14 32 13.5 L32 18.5 L25 18.5 L22 16 Z" fill="#c4c7c6"/></svg>
<svg class="abs" style="left:617px;top:570px" width="66" height="32" viewBox="0 0 66 32"><path d="M44 5 L33 5 C26 6 22 12 22 20 L22 25 L27 27 L31 22 L31 19 C31 16 32 14 34 13.5 L34 18.5 L41 18.5 L44 16 Z" fill="#c4c7c6"/></svg>
</body></html>
